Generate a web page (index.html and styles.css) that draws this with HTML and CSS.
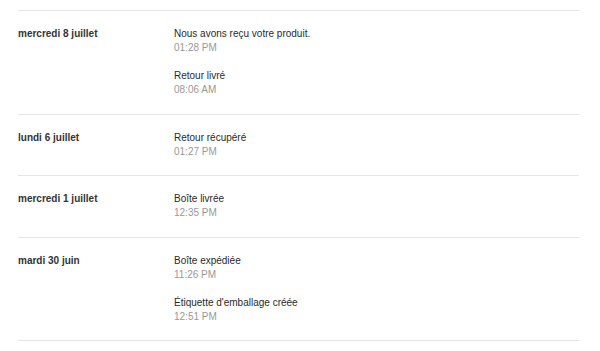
FILE: index.html
```html
<!DOCTYPE html>
<html>
<head>
  <title>Suivi du retour</title>
  <link rel="stylesheet" href="styles.css">
</head>
<body>
  <div class="timeline">
    <div class="day">
      <div class="day-date">mercredi 8 juillet</div>
      <div class="events">
        <div class="event">
          <p class="event-title">Nous avons reçu votre produit.</p>
          <p class="event-time">01:28 PM</p>
        </div>
        <div class="event">
          <p class="event-title">Retour livré</p>
          <p class="event-time">08:06 AM</p>
        </div>
      </div>
    </div>

    <div class="day">
      <div class="day-date">lundi 6 juillet</div>
      <div class="events">
        <div class="event">
          <p class="event-title">Retour récupéré</p>
          <p class="event-time">01:27 PM</p>
        </div>
      </div>
    </div>

    <div class="day">
      <div class="day-date">mercredi 1 juillet</div>
      <div class="events">
        <div class="event">
          <p class="event-title">Boîte livrée</p>
          <p class="event-time">12:35 PM</p>
        </div>
      </div>
    </div>

    <div class="day">
      <div class="day-date">mardi 30 juin</div>
      <div class="events">
        <div class="event">
          <p class="event-title">Boîte expédiée</p>
          <p class="event-time">11:26 PM</p>
        </div>
        <div class="event">
          <p class="event-title">Étiquette d'emballage créée</p>
          <p class="event-time">12:51 PM</p>
        </div>
      </div>
    </div>
  </div>
</body>
</html>
```

FILE: styles.css
```css
body {
  margin: 0;
  padding: 10px 21px 0 18px;
  background-color: #fff;
  font-family: "Liberation Sans", Arial, sans-serif;
  font-size: 10px;
  color: #2a2a2a;
}

.timeline {
  border-bottom: 1px solid #e6e6e6;
}

.day {
  display: grid;
  grid-template-columns: 156px 1fr;
  padding: 16px 0 16.5px;
  border-top: 1px solid #e6e6e6;
}

.day-date {
  font-weight: bold;
  line-height: 14px;
  color: #333;
}

.events {
  display: flex;
  flex-direction: column;
  gap: 14px;
}

.event p {
  margin: 0;
  line-height: 14px;
}

.event-time {
  color: #999;
}
```
